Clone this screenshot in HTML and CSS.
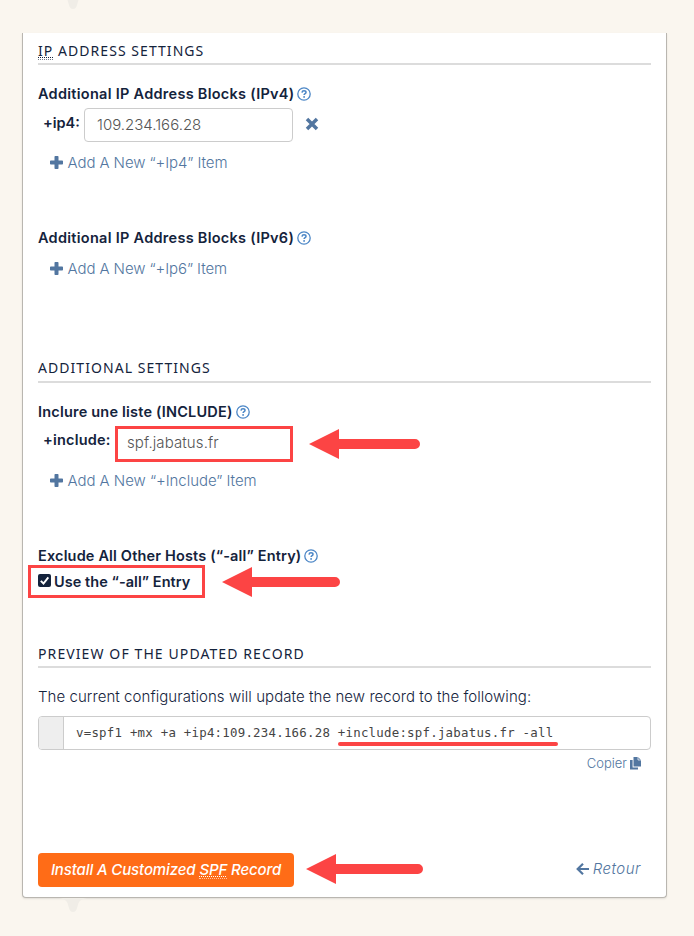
FILE: index.html
```
<!DOCTYPE html>
<html lang="fr">
<head>
<meta charset="utf-8">
<title>SPF</title>
<link rel="stylesheet" href="styles.css">
</head>
<body>
<svg width="0" height="0" class="defs">
  <symbol id="help" viewBox="0 0 14 14"><circle cx="7" cy="7" r="6.2" fill="none" stroke="currentColor" stroke-width="1.3"/><path d="M5 5.6C5.1 4.3 6 3.8 7 3.8c1.200 0 2 .7 2 1.600C9 6.700 7.100 6.600 7.100 8" fill="none" stroke="currentColor" stroke-width="1.500"/><circle cx="7.100" cy="9.900" r=".95" fill="currentColor"/></symbol>
  <symbol id="plus" viewBox="0 0 13 13"><path d="M5.300 0h2.400q.8 0 .8.8v3.700h3.700q.8 0 .8.8v2.400q0 .8-.8.8H8.500v3.700q0 .8-.8.8H5.300q-.8 0-.8-.8V8.500H.8q-.8 0-.8-.8V5.300q0-.8.8-.8h3.700V.8q0-.8.8-.8z" fill="currentColor"/></symbol>
  <symbol id="drip" viewBox="0 0 28 14"><path d="M0 0h28q-7 1-8.500 5l-1.500 5q-1 4-4 4t-4-4L8.500 5Q7 1 0 0z" fill="currentColor"/></symbol>
</svg>
<svg class="drip drip-top"><use href="#drip"/></svg>
<main class="card">
  <section class="ip">
    <h2><abbr title="Internet Protocol">IP</abbr> <span>ADDRESS SETTINGS</span></h2>
    <div class="label first"><span class="t-ip">Additional IP Address Blocks (IPv4)</span><svg class="help"><use href="#help"/></svg></div>
    <div class="field">
      <span class="prefix">+ip4:</span>
      <div class="input">109.234.166.28</div>
      <svg class="remove" viewBox="0 0 14 14"><path d="M2 2l10 10M12 2L2 12" stroke="currentColor" stroke-width="3.500"/></svg>
    </div>
    <a class="add"><svg><use href="#plus"/></svg><span>Add A New “+Ip4” Item</span></a>
    <div class="label v6"><span class="t-ip">Additional IP Address Blocks (IPv6)</span><svg class="help"><use href="#help"/></svg></div>
    <a class="add add-v6"><svg><use href="#plus"/></svg><span>Add A New “+Ip6” Item</span></a>
  </section>
  <section class="additional">
    <h2>ADDITIONAL SETTINGS</h2>
    <div class="label first"><span class="t-inc">Inclure une liste (INCLUDE)</span><svg class="help"><use href="#help"/></svg></div>
    <div class="field include">
      <span class="prefix">+include:</span>
      <div class="input marked">spf.jabatus.fr</div>
      <svg class="arrow" width="111" height="30"><path d="M0 15L30 0v10h76a5 5 0 0 1 0 10H30v10z"/></svg>
    </div>
    <a class="add"><svg><use href="#plus"/></svg><span>Add A New “+Include” Item</span></a>
    <div class="label exclude"><span class="t-exc">Exclude All Other Hosts (“-all” Entry)</span><svg class="help"><use href="#help"/></svg></div>
    <div class="check-row">
      <div class="check"><svg class="box" viewBox="0 0 13 13"><rect width="13" height="13" rx="2" fill="#14233c"/><path d="M2.800 6.800l2.700 2.700 4.800-6.200" fill="none" stroke="#fff" stroke-width="1.900"/></svg><span>Use the “-all” Entry</span></div>
      <svg class="arrow" width="118" height="30"><path d="M0 15L30 0v10h83a5 5 0 0 1 0 10H30v10z"/></svg>
    </div>
  </section>
  <section class="preview">
    <h2>PREVIEW OF THE UPDATED RECORD</h2>
    <p>The current configurations will update the new record to the following:</p>
    <div class="record"><div class="addon"></div><div class="code">v=spf1 +mx +a +ip4:109.234.166.28 <span class="mark">+include:spf.jabatus.fr -all</span></div></div>
    <div class="copy"><span>Copier</span><svg viewBox="0 0 11 13"><path d="M3.500 0H8l3 3v6.500H3.500z" fill="#5276a0"/><path d="M8 0v3h3" fill="none" stroke="#fff" stroke-width=".7"/><path d="M0 3h2.600v7.400H8V12.500H0z" fill="#5276a0"/></svg></div>
  </section>
  <footer>
    <a class="button">Install A Customized <abbr title="Sender Policy Framework">SPF</abbr> Record</a>
    <svg class="arrow" width="117" height="30"><path d="M0 15L30 0v10h82a5 5 0 0 1 0 10H30v10z"/></svg>
    <a class="back"><svg viewBox="0 0 13 12"><path d="M13 6H2M7 .8L1.700 6 7 11.200" fill="none" stroke="currentColor" stroke-width="2.200"/></svg><span>Retour</span></a>
  </footer>
</main>
<svg class="drip drip-bottom"><use href="#drip"/></svg>
</body>
</html>
```
FILE: styles.css
```
* { box-sizing: border-box; }
body {
  margin: 0;
  height: 936px;
  overflow: hidden;
  background: #faf6ef;
  color: #14233c;
  font: 300 15px/20px Inter, "Liberation Sans", sans-serif;
}
.defs { position: absolute; }
.drip { display: block; width: 28px; height: 14px; margin-left: 59px; color: #f0ede7; }
.drip-top { margin-top: -5px; }
.drip-bottom { margin-top: 0; }
.card {
  width: 645px;
  height: 865px;
  margin: 24px 0 0 22px;
  padding: 5px 15px 0;
  background: #fff;
  border: 1px solid #b9b6b0;
  border-top: 0;
  border-radius: 0 0 4px 4px;
  box-shadow: 0 1px 2px #0000001a;
}
.ip { height: 318px; }
.additional { height: 285px; }
.preview { height: 212px; }
h2 {
  margin: 0;
  height: 27px;
  border-bottom: 2px solid #dcdcdc;
  font: 400 14px/26px "Noto Sans", sans-serif;
  letter-spacing: 1.05px;
  white-space: nowrap;
}
.additional h2 { line-height: 24px; }
.preview h2 { letter-spacing: 1.1px; }
abbr {
  display: inline-block;
  height: 18px;
  line-height: 17px;
  text-decoration: underline dotted 1px;
  text-underline-offset: 1px;
  border-bottom: 1px dotted #14233c99;
}
.button abbr { border-color: #ffffff99; }
.label { display: flex; align-items: center; height: 20px; font-weight: 600; font-size: 14.500px; white-space: nowrap; }
.label.first { margin-top: 19px; }
.t-ip { letter-spacing: .28px; }
.t-inc { letter-spacing: .2px; }
.t-exc { letter-spacing: .16px; }
.help { width: 14px; height: 14px; margin-left: 3px; color: #4b86c6; }
.field { display: flex; align-items: flex-start; height: 34px; margin-top: 4px; padding-left: 5px; }
.prefix { width: 41px; margin-top: 5px; font-weight: 600; font-size: 14.500px; white-space: nowrap; }
.input {
  width: 209px;
  height: 34px;
  padding: 0 12px;
  border: 1px solid #ccc;
  border-radius: 4px;
  color: #555;
  line-height: 32px;
  font-size: 15px;
}
.remove { width: 14px; height: 14px; margin: 9px 0 0 12px; color: #5276a0; }
.add { display: flex; align-items: center; height: 20px; margin: 11px 0 0 12px; color: #5276a0; letter-spacing: -.09px; white-space: nowrap; }
.add svg { width: 13px; height: 13px; margin: -1px 4.500px 0 0; }
.label.v6 { margin-top: 55px; }
.add-v6 { margin-top: 11px; }
.include { height: 36px; }
.include .prefix { width: 72px; margin-top: 4px; letter-spacing: .2px; }
.include .input { width: 178px; height: 36px; padding: 0 9px; border: 3px solid #fc4444; border-radius: 0; line-height: 28px; letter-spacing: .1px; }
.include + .add { margin-top: 9px; letter-spacing: -.05px; }
.label.exclude { margin-top: 55px; }
.arrow { flex: none; fill: #fc4444; }
.include .arrow { margin: 3px 0 0 16px; }
.check-row { display: flex; margin: -1px 0 0 -10px; height: 33px; }
.check { display: flex; align-items: center; width: 177px; height: 33px; padding-left: 7px; border: 3px solid #fc4444; font-weight: 600; font-size: 14.500px; letter-spacing: .05px; white-space: nowrap; }
.check .box { width: 13px; height: 13px; margin: -3px 3px 0 0; }
.check-row .arrow { margin: 2px 0 0 17px; }
.preview p { margin: 19px 0 9px; letter-spacing: .06px; white-space: nowrap; }
.record { display: flex; height: 34px; border: 1px solid #ccc; border-radius: 4px; overflow: hidden; }
.addon { width: 25px; background: #eee; border-right: 1px solid #ccc; }
.code { padding-left: 12px; color: #444; font: 400 12.400px/32px "DejaVu Sans Mono", monospace; letter-spacing: .24px; white-space: pre; }
.mark { position: relative; }
.mark::after { content: ""; position: absolute; left: 0; bottom: -6px; width: 220px; height: 4px; border-radius: 2px; background: #fc4444; }
.copy { display: flex; justify-content: flex-end; align-items: center; margin: 3px 10px 0 0; color: #5276a0; font-size: 13px; }
.copy svg { width: 11px; height: 13px; margin-left: 3px; }
footer { display: flex; align-items: flex-start; }
.button { width: 256px; height: 34px; border-radius: 4px; background: #ff6c17; color: #fff; font: italic 500 15px/34px Inter, sans-serif; letter-spacing: -.12px; text-align: center; white-space: nowrap; }
footer .arrow { margin: 1px 0 0 12px; }
.back { display: flex; align-items: center; height: 32px; margin: 0 10px 0 auto; color: #5276a0; font-style: italic; letter-spacing: .5px; }
.back svg { width: 13px; height: 12px; margin-right: 4px; }
```
